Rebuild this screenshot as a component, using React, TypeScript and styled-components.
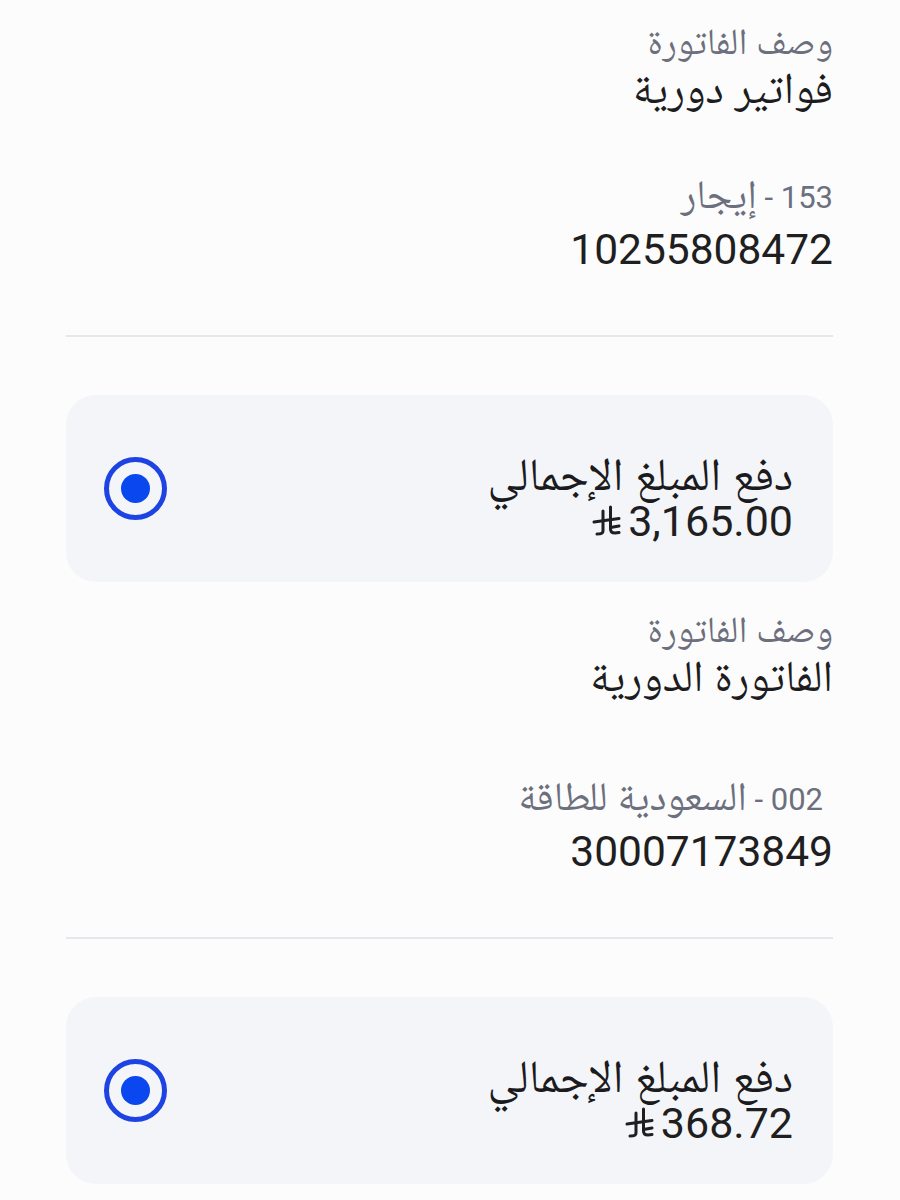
import React from 'react'
import styled, { createGlobalStyle } from 'styled-components'

const GlobalStyle = createGlobalStyle`
  html, body {
    margin: 0;
    padding: 0;
    background: #fcfcfc;
  }
  body {
    font-family: Roboto, "Noto Naskh Arabic", "Noto Sans Arabic", "DejaVu Sans", sans-serif;
    -webkit-font-smoothing: antialiased;
  }
`

const Page = styled.div`
  direction: rtl;
  width: 900px;
  min-height: 1200px;
  box-sizing: border-box;
  padding: 0 67px 0 66px;
  background: #fcfcfc;
`

const Section = styled.section<{ first?: boolean }>`
  display: flex;
  flex-direction: column;
  padding-top: ${({ first }) => (first ? '22px' : '28px')};
`

const Label = styled.div`
  font-size: 37px;
  line-height: 40px;
  color: #6c6f7d;
`

const Value = styled.div`
  margin-top: 4px;
  font-size: 44px;
  line-height: 44px;
  color: #1d1d1f;
`

const CodeLine = styled.div<{ spaced?: boolean; indent?: number }>`
  margin-top: ${({ spaced }) => (spaced ? '79px' : '65px')};
  padding-right: ${({ indent }) => indent || 0}px;
  font-size: 31px;
  line-height: 40px;
  color: #6c6f7d;
`

const ArabicPart = styled.span`
  font-size: 1.3em;
  line-height: 40px;
`

const AccountNumber = styled.div`
  margin-top: 7px;
  font-size: 42.5px;
  line-height: 50px;
  color: #1f1f21;
`

const Divider = styled.hr`
  margin: 60px 0 0;
  border: none;
  height: 2px;
  background: #e5e7ee;
`

const PayCard = styled.label`
  margin-top: 58px;
  height: 187px;
  box-sizing: border-box;
  display: flex;
  align-items: center;
  justify-content: space-between;
  padding: 0 40px 0 38px;
  border-radius: 30px;
  background: #f4f5f9;
  cursor: pointer;
`

const CardText = styled.div`
  display: flex;
  flex-direction: column;
  padding-top: 14px;
`

const CardTitle = styled.div`
  font-size: 46px;
  line-height: 50px;
  color: #1b1b1d;
`

const AmountRow = styled.div`
  display: flex;
  align-items: center;
  gap: 7px;
  font-size: 43px;
  line-height: 44px;
  color: #1f1f21;
`

const Radio = styled.span`
  width: 63px;
  height: 63px;
  box-sizing: border-box;
  border: 5px solid #1d43e2;
  border-radius: 50%;
  display: flex;
  align-items: center;
  justify-content: center;
  &::after {
    content: '';
    width: 29px;
    height: 29px;
    border-radius: 50%;
    background: #0b47ef;
  }
`

function RiyalSign() {
  return (
    <svg width="30" height="33" viewBox="0 0 30 33" fill="none" stroke="#1f1f21" strokeWidth="3" strokeLinecap="round" strokeLinejoin="round">
      <path d="M12 7 L12 27 Q12 30 6 30" />
      <path d="M19.5 3 L19.5 25 Q19.5 29 24 29 L28 28.5" />
      <path d="M3 18 L28 14.5" />
      <path d="M19.5 23.5 L28 22" />
    </svg>
  )
}

type Bill = {
  description: string
  code: string
  biller: string
  account: string
  amount: string
  spaced?: boolean
  indent?: number
}

const bills: Bill[] = [
  { description: 'فواتير دورية', code: '153', biller: 'إيجار', account: '10255808472', amount: '3,165.00' },
  {
    description: 'الفاتورة الدورية',
    code: '002',
    biller: 'السعودية للطاقة',
    account: '30007173849',
    amount: '368.72',
    spaced: true,
    indent: 10,
  },
]

export default function App() {
  return (
    <>
      <GlobalStyle />
      <Page>
        {bills.map((bill, i) => (
          <Section key={bill.account} first={i === 0}>
            <Label>وصف الفاتورة</Label>
            <Value>{bill.description}</Value>
            <CodeLine spaced={bill.spaced} indent={bill.indent}>
              {bill.code} - <ArabicPart>{bill.biller}</ArabicPart>
            </CodeLine>
            <AccountNumber>{bill.account}</AccountNumber>
            <Divider />
            <PayCard>
              <CardText>
                <CardTitle>دفع المبلغ الإجمالي</CardTitle>
                <AmountRow>
                  <span>{bill.amount}</span>
                  <RiyalSign />
                </AmountRow>
              </CardText>
              <Radio />
            </PayCard>
          </Section>
        ))}
      </Page>
    </>
  )
}
